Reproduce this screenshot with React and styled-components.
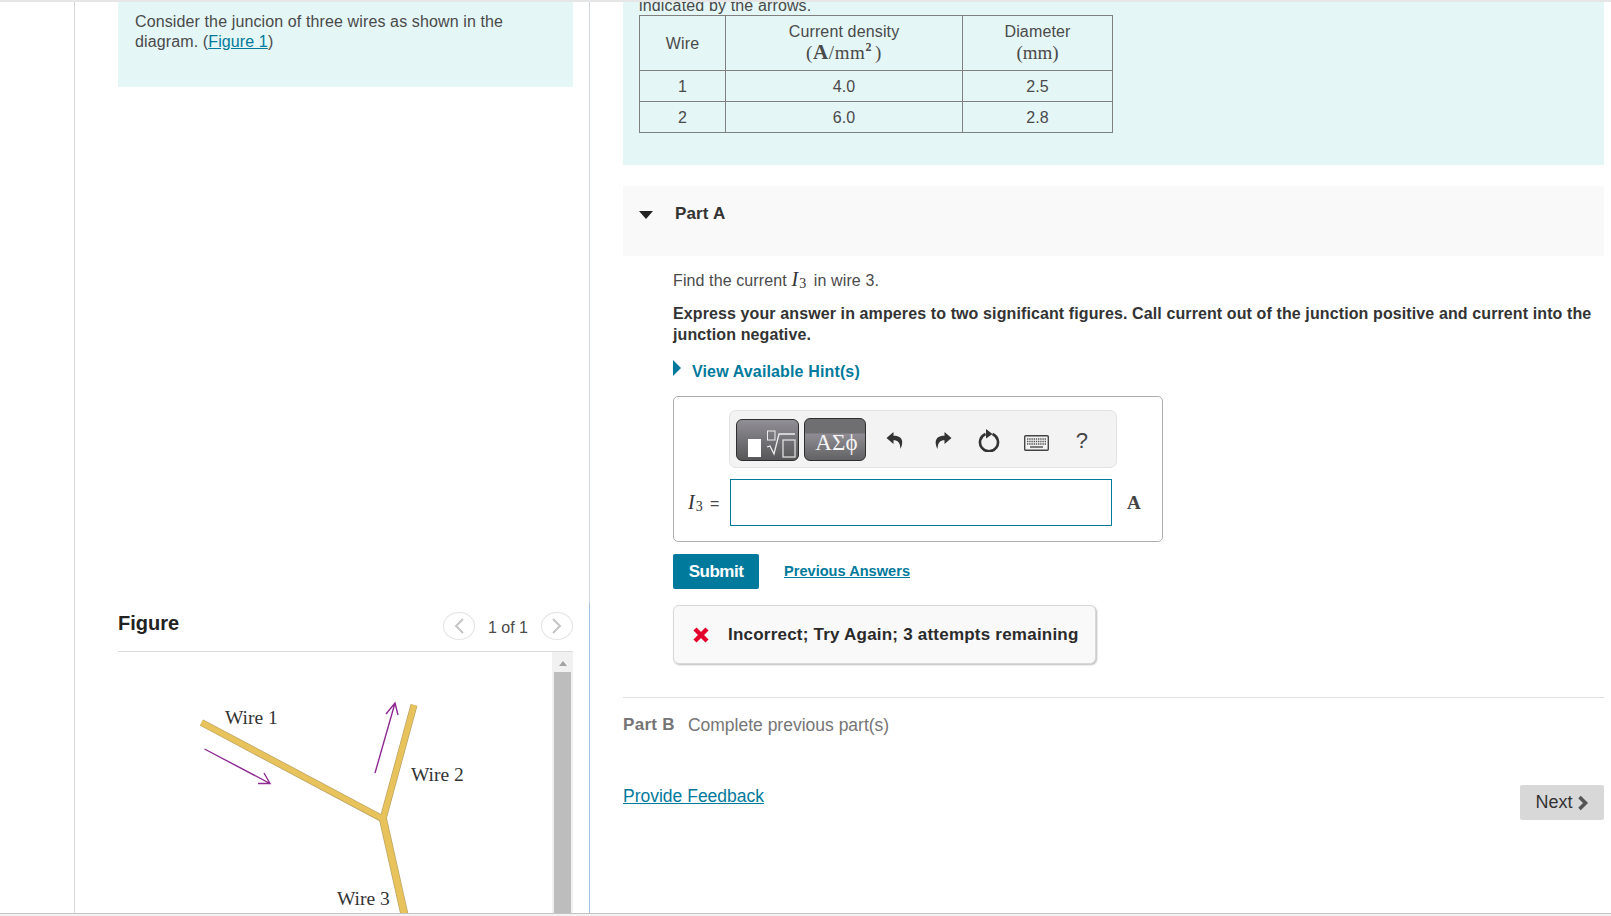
import React from "react";
import styled, { createGlobalStyle } from "styled-components";

const Global = createGlobalStyle`
  html, body { margin: 0; padding: 0; background: #fff; overflow: hidden; }
  body { font-family: "Liberation Sans", Arial, sans-serif; color: #4a4a4a; letter-spacing: 0.14px; }
`;

const Page = styled.div`
  width: 1611px; height: 916px; display: flex; flex-direction: column; overflow: hidden;
`;
const TopRule = styled.div`height: 2px; flex: none; background: #e6e6e6;`;
const BottomBar = styled.div`flex: none; height: 2px; background: #f3f3f3; border-top: 1px solid #c4c4c4;`;
const Columns = styled.div`flex: 1; min-height: 0; display: flex; overflow: hidden;`;
const LeftPane = styled.div`
  width: 516px; margin-left: 74px; flex: none; display: flex; flex-direction: column;
  border-left: 1px solid #d4d8dc; box-sizing: border-box;
`;
const IntroSection = styled.div`
  flex: 1; min-height: 0; padding-left: 43px; padding-right: 16px; border-right: 1px solid #ced5dc;
`;
const Intro = styled.div`
  height: 85px; background: #e5f6f6; box-sizing: border-box; padding: 10px 16px 10px 17px;
  font-size: 16px; line-height: 20px; letter-spacing: 0.12px;
`;
const TextLink = styled.a`color: #007a9c; text-decoration: underline;`;
const FigureSection = styled.div`
  flex: none; height: 310px; padding-left: 43px; padding-right: 16px; display: flex; flex-direction: column;
  border-right: 1px solid #a9c4e0;
`;
const FigureHead = styled.div`
  flex: none; height: 49px; box-sizing: border-box; display: flex; align-items: flex-start; border-bottom: 1px solid #dcdcdc;
  padding-top: 8px;
`;
const FigureTitle = styled.div`font-size: 20px; font-weight: 700; color: #222; line-height: 24px; flex: 1; letter-spacing: 0;`;
const Pager = styled.div`display: flex; align-items: flex-start; gap: 13px; font-size: 16px; color: #4a4a4a; margin-top: 1px; letter-spacing: 0;`;
const PageLabel = styled.span`padding-top: 7px; line-height: 18px;`;
const PageButton = styled.div`
  width: 32px; height: 28px; border: 1px solid #e3e3e3; border-radius: 50%; box-sizing: border-box;
  display: flex; align-items: center; justify-content: center; background: #fff;
`;
const FigureBody = styled.div`flex: 1; min-height: 0; display: flex;`;
const FigureCanvas = styled.div`flex: 1; min-width: 0; overflow: hidden;`;
const Scrollbar = styled.div`
  width: 21px; flex: none; background: #f1f1f1; display: flex; flex-direction: column; align-items: center;
`;
const ScrollArrow = styled.div`
  width: 0; height: 0; margin: 9px 0 6px; border-left: 4.5px solid transparent; border-right: 4.5px solid transparent;
  border-bottom: 5px solid #a3a3a3;
`;
const ScrollThumb = styled.div`width: 17px; flex: 1; background: #bdbdbd;`;

const RightPane = styled.div`flex: 1; min-width: 0; padding: 0 7px 0 33px;`;
const Statement = styled.div`
  margin-top: -8px; height: 171px; box-sizing: border-box; background: #e5f6f6; padding: 0 16px; font-size: 16px;
`;
const Clipped = styled.div`line-height: 20px; height: 20px; padding-top: 2px; box-sizing: border-box;`;
const DataTable = styled.table`
  border-collapse: collapse; width: 473px; table-layout: fixed; margin-top: 1px; text-align: center; color: #4a4a4a;
  letter-spacing: 0.14px;
  & td { border: 1px solid #808080; padding: 0; }
`;
const HeaderRow = styled.tr`height: 55px; line-height: 21px;`;
const DataRow = styled.tr`height: 31px; line-height: 20px; & td { padding-top: 2px; }`;
const StackCell = styled.td`&& { padding-bottom: 2px; }`;
const MathUnit = styled.span`font-family: "Liberation Serif", serif; font-size: 19px; color: #4a4a4a; letter-spacing: ${(p) => p.$spread || 0}px;`;
const Bold = styled.b`font-weight: 700; font-size: 21px;`;
const Sup = styled.sup`font-size: 12px; line-height: 0; font-weight: 700; margin-right: 3px;`;

const PartHeader = styled.div`
  margin-top: 21px; height: 70px; background: #f9f9f9; display: flex; align-items: flex-start; padding: 19px 0 0 16px; box-sizing: border-box;
`;
const DownCaret = styled.div`
  width: 0; height: 0; margin-top: 6px; border-left: 7px solid transparent; border-right: 7px solid transparent; border-top: 8px solid #222;
`;
const PartTitle = styled.div`margin-left: 22px; font-size: 17px; font-weight: 700; color: #333; line-height: 18px; letter-spacing: 0.15px;`;
const PartBody = styled.div`padding: 13px 0 0 50px;`;
const Prompt = styled.div`font-size: 16px; line-height: 20px; letter-spacing: 0.11px;`;
const MathVar = styled.i`font-family: "Liberation Serif", serif; font-size: 20px; color: #333;`;
const Sub = styled.span`
  font-family: "Liberation Serif", serif; font-size: 14px; line-height: 0; color: #333; vertical-align: -2px; margin: 0 3px 0 1px;
`;
const Instruction = styled.div`margin-top: 12px; font-size: 16px; font-weight: 700; line-height: 21px; color: #333; width: 930px; letter-spacing: 0.11px;`;
const HintRow = styled.div`margin-top: 17px; display: flex; align-items: flex-start; gap: 11px; height: 20px;`;
const HintCaret = styled.div`
  width: 0; height: 0; margin-top: -2px; border-top: 8px solid transparent; border-bottom: 8px solid transparent; border-left: 8px solid #007a9c;
`;
const HintText = styled.div`font-size: 16px; font-weight: 700; color: #007a9c; line-height: 21px; margin-top: -1px;`;

const AnswerBox = styled.div`
  margin-top: 14px; width: 490px; height: 146px; box-sizing: border-box; border: 1px solid #adadad; border-radius: 5px;
  padding: 13px 0 0 55px;
`;
const Toolbar = styled.div`
  width: 388px; height: 58px; box-sizing: border-box; background: #f3f3f3; border: 1px solid #e2e2e2; border-radius: 7px;
  display: flex; align-items: center; padding: 0 0 0 6px;
`;
const TemplateButton = styled.div`
  width: 63px; height: 42px; box-sizing: border-box; border: 1px solid #2e2e2e; border-radius: 6px; margin-top: 1px;
  background: linear-gradient(#918f96, #565658); display: flex; align-items: center; justify-content: center;
`;
const SymbolButton = styled.div`
  width: 62px; height: 43px; margin-left: 5px; box-sizing: border-box; border: 1px solid #2e2e2e; border-radius: 6px;
  background: linear-gradient(#6f6e71 0, #6f6e71 14px, #8f8d93 15px, #626264 100%);
  color: #f4f4f4; font-family: "Liberation Serif", serif; font-size: 23px; text-align: center; line-height: 47px; overflow: hidden; padding-left: 3px;
`;
const ToolIcon = styled.div`
  width: ${(p) => p.$w}px; flex: none; display: flex; align-items: center; justify-content: center; color: #333; margin-top: ${(p) => p.$top || 0}px;
`;
const Help = styled.div`font-size: 22px; color: #444; width: 48px; text-align: center; flex: none; margin-top: 4px;`;
const InputRow = styled.div`display: flex; align-items: center; margin: 11px 0 0 -41px;`;
const InputLabel = styled.div`width: 42px; flex: none; font-size: 16px; white-space: nowrap;`;
const EqualSign = styled.span`margin-left: 4px;`;
const AnswerInput = styled.div`width: 382px; height: 47px; flex: none; box-sizing: border-box; border: 1px solid #007a9c; background: #fff;`;
const Unit = styled.div`margin-left: 15px; font-family: "Liberation Serif", serif; font-size: 19px; font-weight: 700; color: #444;`;

const ActionRow = styled.div`margin-top: 12px; display: flex; align-items: center; gap: 25px;`;
const SubmitButton = styled.div`
  width: 86px; height: 35px; background: #007a9c; border-radius: 2px; color: #fff; font-size: 17px; font-weight: 700; letter-spacing: -0.5px;
  display: flex; align-items: center; justify-content: center;
`;
const PrevLink = styled.a`font-size: 14.6px; font-weight: 700; color: #007a9c; text-decoration: underline; letter-spacing: 0; margin-bottom: 2px;`;
const Feedback = styled.div`
  margin-top: 16px; width: 423px; height: 59px; box-sizing: border-box; background: #f9f9f9; border: 1px solid #d8d8d8; border-radius: 6px;
  box-shadow: 1px 1px 2px #bbb; display: flex; align-items: center; padding-left: 18px; gap: 18px;
  font-size: 17px; font-weight: 700; color: #2a2a2a; letter-spacing: 0.22px; white-space: nowrap;
`;
const PartB = styled.div`
  margin-top: 33px; border-top: 1px solid #e0e0e0; padding-top: 17px; display: flex; gap: 13px; font-size: 17.5px; line-height: 20px; color: #757575; white-space: nowrap; letter-spacing: 0;
`;
const PartBLabel = styled.b`font-weight: 700; font-size: 17px; letter-spacing: 0.3px;`;
const Footer = styled.div`margin-top: 42px; display: flex; justify-content: space-between; align-items: flex-start;`;
const FeedbackLink = styled.a`font-size: 17.5px; line-height: 24px; color: #007a9c; text-decoration: underline; margin-top: 7px; letter-spacing: 0;`;
const NextButton = styled.div`
  width: 84px; height: 35px; background: #d8d8d8; border-radius: 2px; font-size: 18px; color: #333; margin-top: 8px; letter-spacing: 0;
  display: flex; align-items: center; justify-content: center; gap: 4px;
`;

const Chevron = ({ left }) => (
  <svg width="12" height="18" viewBox="0 0 12 18" fill="none" stroke="#c4c4c4" strokeWidth="2">
    <path d={left ? "M10 2 L3 9 L10 16" : "M2 2 L9 9 L2 16"} />
  </svg>
);

const NextChevron = () => (
  <svg width="12" height="16" viewBox="0 0 12 16" fill="none" stroke="#555" strokeWidth="3.6">
    <path d="M2.5 2 L8.5 8 L2.5 14" />
  </svg>
);

const WireFigure = () => (
  <svg width="433" height="262" viewBox="118 651 433 262" style={{ display: "block" }}>
    <g fill="none" strokeLinecap="butt">
      <path d="M201.5 721.5 L383 818 L414 704" stroke="#b9a263" strokeWidth="7" strokeLinejoin="miter" />
      <path d="M383 818 L405 916" stroke="#b9a263" strokeWidth="8" />
      <path d="M201.5 721.5 L383 818 L414 704" stroke="#e8c35c" strokeWidth="5.6" strokeLinejoin="miter" />
      <path d="M383 818 L405 916" stroke="#e8c35c" strokeWidth="6.6" />
      <path d="M204.5 748 L270 782.5 M258 782.5 L270 782.5 L264 772" stroke="#8e2a92" strokeWidth="1.4" />
      <path d="M375 772 L395 702 M386 713 L395 702 L398 714" stroke="#8e2a92" strokeWidth="1.4" />
    </g>
    <g fontFamily="'Liberation Serif', serif" fontSize="19.5" fill="#333" letterSpacing="0">
      <text x="225" y="723">Wire 1</text>
      <text x="411" y="780">Wire 2</text>
      <text x="337" y="904">Wire 3</text>
    </g>
  </svg>
);

const TemplateIcon = () => (
  <svg width="56" height="38" viewBox="0 0 56 38">
    <rect x="8" y="18" width="13" height="18" fill="#fff" />
    <rect x="27.5" y="10" width="7.5" height="9" fill="none" stroke="#eee" strokeWidth="1" />
    <path d="M27 26 L30 25 L34 33 L39 13 L55 13" fill="none" stroke="#eee" strokeWidth="1.3" />
    <rect x="43" y="19" width="12" height="17" fill="none" stroke="#ddd" strokeWidth="1.3" />
  </svg>
);

const TurnIcon = ({ mirror }) => (
  <svg width="18" height="19" viewBox="0 0 18 19" style={mirror ? { transform: "scaleX(-1)" } : undefined}>
    <path d="M7.5 1 L0.5 7 L7.5 13 V9.3 C12 9.3 14 11.5 14.5 18 C17.5 12 17.5 4.8 7.5 4.8 Z" fill="#333" />
  </svg>
);

const RefreshIcon = () => (
  <svg width="24" height="24" viewBox="0 0 24 24" fill="none">
    <path d="M8.5 5 A9 9 0 1 0 15.5 5" stroke="#333" strokeWidth="2.6" transform="translate(0 1)" />
    <path d="M9 1 L15.5 6 L9 10.5 Z" fill="#333" />
  </svg>
);

const KeyboardIcon = () => (
  <svg width="25" height="16" viewBox="0 0 25 16">
    <rect x="0.7" y="0.7" width="23.6" height="14.6" rx="1" fill="#f3f3f3" stroke="#444" strokeWidth="1.4" />
    <path d="M3 4h19M3 6.5h19M3 9h19" stroke="#555" strokeWidth="1.3" strokeDasharray="1.4 .8" />
    <path d="M6 12h13" stroke="#555" strokeWidth="1.5" />
  </svg>
);

const CrossIcon = () => (
  <svg width="18" height="18" viewBox="0 0 18 18">
    <path d="M3 3 L15 15 M15 3 L3 15" stroke="#e2002b" strokeWidth="4.4" />
  </svg>
);

export default function App() {
  return (
    <Page>
      <Global />
      <TopRule />
      <Columns>
        <LeftPane>
          <IntroSection>
            <Intro>
              Consider the juncion of three wires as shown in the diagram. (<TextLink>Figure 1</TextLink>)
            </Intro>
          </IntroSection>
          <FigureSection>
            <FigureHead>
              <FigureTitle>Figure</FigureTitle>
              <Pager>
                <PageButton><Chevron left /></PageButton>
                <PageLabel>1 of 1</PageLabel>
                <PageButton><Chevron /></PageButton>
              </Pager>
            </FigureHead>
            <FigureBody>
              <FigureCanvas><WireFigure /></FigureCanvas>
              <Scrollbar>
                <ScrollArrow />
                <ScrollThumb />
              </Scrollbar>
            </FigureBody>
          </FigureSection>
        </LeftPane>
        <RightPane>
          <Statement>
            <Clipped>indicated by the arrows.</Clipped>
            <DataTable>
              <colgroup>
                <col style={{ width: 86 }} />
                <col style={{ width: 237 }} />
                <col style={{ width: 150 }} />
              </colgroup>
              <tbody>
                <HeaderRow>
                  <td>Wire</td>
                  <StackCell>Current density<br /><MathUnit $spread={0.6}>(<Bold>A</Bold>/mm<Sup>2</Sup>)</MathUnit></StackCell>
                  <StackCell>Diameter<br /><MathUnit>(mm)</MathUnit></StackCell>
                </HeaderRow>
                <DataRow><td>1</td><td>4.0</td><td>2.5</td></DataRow>
                <DataRow><td>2</td><td>6.0</td><td>2.8</td></DataRow>
              </tbody>
            </DataTable>
          </Statement>
          <PartHeader>
            <DownCaret />
            <PartTitle>Part A</PartTitle>
          </PartHeader>
          <PartBody>
            <Prompt>Find the current <MathVar>I</MathVar><Sub>3</Sub> in wire 3.</Prompt>
            <Instruction>Express your answer in amperes to two significant figures. Call current out of the junction positive and current into the junction negative.</Instruction>
            <HintRow>
              <HintCaret />
              <HintText>View Available Hint(s)</HintText>
            </HintRow>
            <AnswerBox>
              <Toolbar>
                <TemplateButton><TemplateIcon /></TemplateButton>
                <SymbolButton>ΑΣϕ</SymbolButton>
                <ToolIcon $w={57} $top={2}><TurnIcon /></ToolIcon>
                <ToolIcon $w={40} $top={2}><TurnIcon mirror /></ToolIcon>
                <ToolIcon $w={51} $top={2}><RefreshIcon /></ToolIcon>
                <ToolIcon $w={44} $top={7}><KeyboardIcon /></ToolIcon>
                <Help>?</Help>
              </Toolbar>
              <InputRow>
                <InputLabel><MathVar>I</MathVar><Sub>3</Sub><EqualSign>=</EqualSign></InputLabel>
                <AnswerInput />
                <Unit>A</Unit>
              </InputRow>
            </AnswerBox>
            <ActionRow>
              <SubmitButton>Submit</SubmitButton>
              <PrevLink>Previous Answers</PrevLink>
            </ActionRow>
            <Feedback>
              <CrossIcon />
              <span>Incorrect; Try Again; 3 attempts remaining</span>
            </Feedback>
          </PartBody>
          <PartB>
            <PartBLabel>Part B</PartBLabel>
            <span>Complete previous part(s)</span>
          </PartB>
          <Footer>
            <FeedbackLink>Provide Feedback</FeedbackLink>
            <NextButton>Next<NextChevron /></NextButton>
          </Footer>
        </RightPane>
      </Columns>
      <BottomBar />
    </Page>
  );
}
